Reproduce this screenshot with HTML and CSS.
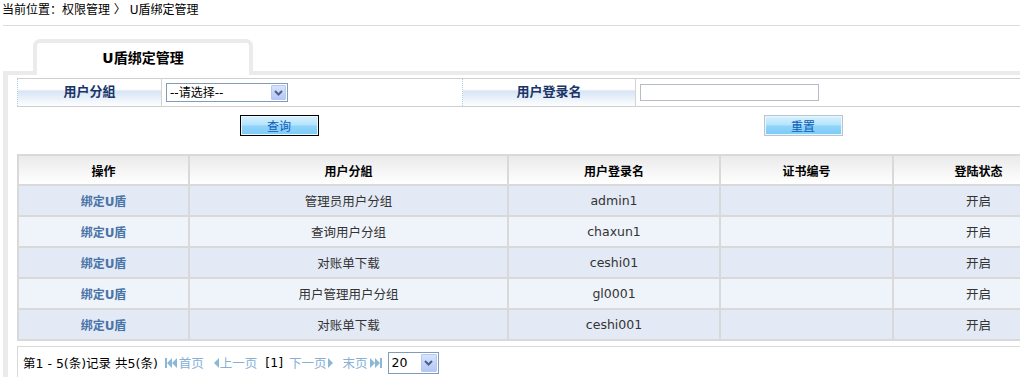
FILE: index.html
```html
<!DOCTYPE html>
<html lang="zh-CN">
<head>
<meta charset="utf-8">
<title>U盾绑定管理</title>
<link rel="stylesheet" href="styles.css">
</head>
<body>
<div class="crumb">当前位置：权限管理 〉 U盾绑定管理</div>
<div class="tabbar"><div class="tab">U盾绑定管理</div></div>
<div class="frame">
  <table class="search">
    <tr>
      <td class="lbl c1">用户分組</td>
      <td class="c2">
        <div class="sel sel1"><span class="seltxt">--请选择--</span><span class="arr"><svg width="9" height="6" viewBox="0 0 9 6"><path d="M1 1 L4.5 4.5 L8 1" fill="none" stroke="#4d6185" stroke-width="2"/></svg></span></div>
      </td>
      <td class="lbl c3">用户登录名</td>
      <td class="c4"><div class="inp"></div></td>
    </tr>
  </table>
  <div class="btnrow">
    <div class="btncell"><span class="btn btn-q">查询</span></div>
    <div class="btncell"><span class="btn btn-r">重置</span></div>
  </div>
  <table class="grid">
    <thead>
      <tr><th class="g1">操作</th><th class="g2">用户分組</th><th class="g3">用户登录名</th><th class="g4">证书编号</th><th class="g5">登陆状态</th></tr>
    </thead>
    <tbody>
      <tr class="odd"><td><a class="lnk">绑定U盾</a></td><td>管理员用户分组</td><td>admin1</td><td></td><td>开启</td></tr>
      <tr class="even"><td><a class="lnk">绑定U盾</a></td><td>查询用户分组</td><td>chaxun1</td><td></td><td>开启</td></tr>
      <tr class="odd"><td><a class="lnk">绑定U盾</a></td><td>对账单下载</td><td>ceshi01</td><td></td><td>开启</td></tr>
      <tr class="even"><td><a class="lnk">绑定U盾</a></td><td>用户管理用户分组</td><td>gl0001</td><td></td><td>开启</td></tr>
      <tr class="odd"><td><a class="lnk">绑定U盾</a></td><td>对账单下载</td><td>ceshi001</td><td></td><td>开启</td></tr>
    </tbody>
  </table>
  <div class="pager">
    <span class="info">第1 - 5(条)记录 共5(条)</span>
    <span class="nav"><svg class="ico" width="13" height="12" viewBox="0 0 13 12"><rect x="0" y="1" width="2" height="10" fill="#8cb8d8"/><path d="M7 1 L2 6 L7 11 Z M12 1 L7 6 L12 11 Z" fill="#8cb8d8"/></svg>首页</span>
    <span class="nav"><svg class="ico" width="6" height="12" viewBox="0 0 6 12"><path d="M6 1 L1 6 L6 11 Z" fill="#8cb8d8"/></svg>上一页</span>
    <span class="cur">[1]</span>
    <span class="nav">下一页<svg class="ico" width="6" height="12" viewBox="0 0 6 12"><path d="M0 1 L5 6 L0 11 Z" fill="#8cb8d8"/></svg></span>
    <span class="nav">末页<svg class="ico" width="13" height="12" viewBox="0 0 13 12"><path d="M1 1 L6 6 L1 11 Z M6 1 L11 6 L6 11 Z" fill="#8cb8d8"/><rect x="11" y="1" width="2" height="10" fill="#8cb8d8"/></svg></span>
    <div class="sel sel2"><span class="seltxt">20</span><span class="arr"><svg width="9" height="6" viewBox="0 0 9 6"><path d="M1 1 L4.5 4.5 L8 1" fill="none" stroke="#4d6185" stroke-width="2"/></svg></span></div>
  </div>
</div>
</body>
</html>
```
FILE: styles.css
```css
html, body {
  margin: 0;
  padding: 0;
  background: #fff;
  overflow: hidden;
}
body {
  width: 1080px;
  font-family: "DejaVu Sans", "Noto Sans CJK SC", sans-serif;
  font-size: 12px;
  color: #000;
}
.crumb {
  height: 22px;
  padding: 3px 0 0 2px;
  line-height: 14px;
  border-bottom: 1px solid #dcdcdc;
  margin-left: 3px;
  text-indent: -3px;
}
.tabbar {
  margin-top: 13px;
  padding-left: 33px;
  position: relative;
  z-index: 1;
  margin-bottom: -4px;
}
.tab {
  width: 212px;
  height: 32px;
  border: 4px solid #ebebeb;
  border-bottom: none;
  border-radius: 7px 7px 0 0;
  background: #fff;
  text-align: center;
  font-weight: bold;
  font-size: 14px;
  line-height: 30px;
  color: #000;
}
.frame {
  margin-left: 3px;
  border-top: 4px solid #ebebeb;
  border-left: 5px solid #ebebeb;
  padding: 3px 0 0 9px;
  width: 1060px;
}
.search {
  width: 1048px;
  border-collapse: collapse;
  border-top: 1px solid #cfcfcf;
  border-bottom: 1px solid #cfcfcf;
  table-layout: fixed;
}
.search td {
  height: 28px;
  padding: 0;
  border-left: 1px solid #d4d4d4;
  box-sizing: border-box;
}
.search td.lbl {
  border: 1px dotted #a9cfe3;
  background: linear-gradient(#ffffff 0%, #ffffff 38%, #d6e4f5 42%, #ffffff 100%);
  text-align: center;
  font-weight: bold;
  font-size: 13px;
  line-height: 14px;
  color: #1b3468;
  padding-bottom: 2px;
}
.c1 { width: 144px; }
.c2 { width: 301px; padding-left: 4px !important; }
.c3 { width: 173px; }
.c4 { padding-left: 4px !important; }
.sel {
  display: flex;
  align-items: center;
  box-sizing: border-box;
  border: 1px solid #7f9db9;
  background: #fff;
}
.sel1 { width: 122px; height: 19px; }
.seltxt {
  flex: 1;
  padding-left: 3px;
  line-height: 16px;
  color: #000;
}
.arr {
  width: 15px;
  height: 15px;
  margin-right: 1px;
  box-sizing: border-box;
  border: 1px solid #b8c8f0;
  border-radius: 1px;
  background: linear-gradient(#d6e2fe, #b4c8f6);
  display: flex;
  align-items: center;
  justify-content: center;
}
.inp {
  width: 179px;
  height: 17px;
  box-sizing: border-box;
  border: 1px solid #b6bdc9;
  background: #fff;
}
.btnrow {
  display: grid;
  grid-template-columns: 524px 524px;
  padding-top: 8px;
  height: 21px;
  margin-bottom: 18px;
}
.btncell {
  display: flex;
  justify-content: center;
}
.btn {
  box-sizing: border-box;
  width: 79px;
  height: 21px;
  display: flex;
  align-items: center;
  justify-content: center;
  font-size: 12px;
  color: #0d5cb8;
  background: linear-gradient(#d9f2ff 0%, #b6e4fc 45%, #8fd3fa 55%, #7dcbf8 100%);
  box-shadow: inset 0 0 0 1px #e9f7ff;
}
.btn-q { border: 1px solid #000; }
.btn-r { border: 1px solid #b9c5cd; }
.grid {
  width: 1048px;
  border-collapse: separate;
  border-spacing: 2px;
  background: #d9d9d9;
  margin-left: 0;
}
.grid th {
  height: 28px;
  background: linear-gradient(#eaeaea, #ffffff);
  font-weight: bold;
  font-size: 12px;
  color: #000;
  padding: 0;
}
.grid td {
  height: 29px;
  text-align: center;
  padding: 0;
  color: #333;
  font-size: 12.5px;
}
.g1 { width: 169px; }
.g2 { width: 317px; }
.g3 { width: 210px; }
.g4 { width: 171px; }
.odd td { background: #e3eaf6; }
.even td { background: #eff3fa; }
.grid td .lnk {
  font-weight: bold;
  color: #4a74a8;
  text-decoration: none;
  font-size: 12px;
}
.pager {
  margin-top: 5px;
  width: 1046px;
  height: 32px;
  border: 1px solid #d9d9d9;
  display: flex;
  align-items: center;
  padding-left: 5px;
  padding-top: 1px;
  box-sizing: border-box;
  font-size: 12.5px;
  color: #000;
}
.info { margin-right: 6px; }
.nav {
  color: #86b0d6;
  display: inline-flex;
  align-items: center;
  margin-right: 8px;
}
.ico { margin: 0 1px; }
.cur { margin-right: 6px; }
.sel2 { width: 51px; height: 22px; margin-left: -3px; }
.sel2 .arr { width: 16px; height: 18px; }
```
